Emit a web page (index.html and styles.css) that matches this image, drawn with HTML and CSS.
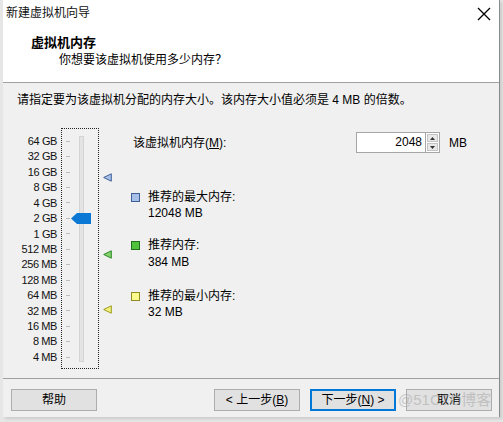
FILE: index.html
```html
<!DOCTYPE html>
<html>
<head>
<meta charset="utf-8">
<link rel="stylesheet" href="styles.css">
</head>
<body>
<div class="window">
  <div class="titlebar">
    <div class="title">新建虚拟机向导</div>
    <div class="tb-x"><svg width="14" height="14" viewBox="0 0 14 14"><path d="M1 1 L13 13 M13 1 L1 13" stroke="#000" stroke-width="1.3" fill="none"/></svg></div>
  </div>
  <div class="header">
    <div class="h-title">虚拟机内存</div>
    <div class="h-sub">你想要该虚拟机使用多少内存？</div>
  </div>
  <div class="content">
    <div class="intro">请指定要为该虚拟机分配的内存大小。该内存大小值必须是 4 MB 的倍数。</div>
    <div class="main">
      <div class="scale">
        <span>64 GB</span><span>32 GB</span><span>16 GB</span><span>8 GB</span><span>4 GB</span>
        <span>2 GB</span><span>1 GB</span><span>512 MB</span><span>256 MB</span><span>128 MB</span>
        <span>64 MB</span><span>32 MB</span><span>16 MB</span><span>8 MB</span><span>4 MB</span>
      </div>
      <div class="slider">
        <div class="ticks">
          <i></i><i></i><i></i><i></i><i></i><i></i><i></i><i></i><i></i><i></i><i></i><i></i><i></i><i></i><i></i>
        </div>
        <div class="track"></div>
        <svg class="thumb" width="20" height="11" viewBox="0 0 20 11"><path d="M0 5.5 L6 0 H20 V11 H6 Z" fill="#0a78d4"/></svg>
      </div>
      <div class="markers">
        <svg class="marker" style="top:45px" width="9" height="9" viewBox="0 0 9 9"><path d="M0.7 4.5 L8.3 0.8 V8.2 Z" fill="#a9c0e6" stroke="#3f5f99" stroke-width="1"/></svg>
        <svg class="marker" style="top:122px" width="9" height="9" viewBox="0 0 9 9"><path d="M0.7 4.5 L8.3 0.8 V8.2 Z" fill="#86d06a" stroke="#2a8a2a" stroke-width="1"/></svg>
        <svg class="marker" style="top:177px" width="9" height="9" viewBox="0 0 9 9"><path d="M0.7 4.5 L8.3 0.8 V8.2 Z" fill="#f3f27c" stroke="#9c9a1e" stroke-width="1"/></svg>
      </div>
      <div class="panel">
        <div class="mem-row">
          <span class="mem-label">该虚拟机内存(<u>M</u>):</span>
          <div class="spin">
            <div class="spin-input">2048</div>
            <div class="spin-btns">
              <div class="sb"><svg width="5" height="3" viewBox="0 0 5 3"><path d="M0 3 L2.5 0 L5 3Z" fill="#333"/></svg></div>
              <div class="sb"><svg width="5" height="3" viewBox="0 0 5 3"><path d="M0 0 L2.5 3 L5 0Z" fill="#333"/></svg></div>
            </div>
          </div>
          <span class="unit">MB</span>
        </div>
        <div class="legend">
          <div class="item">
            <span class="sq sq-blue"></span>
            <div class="txt"><div>推荐的最大内存:</div><div>12048 MB</div></div>
          </div>
          <div class="item item-green">
            <span class="sq sq-green"></span>
            <div class="txt"><div>推荐内存:</div><div>384 MB</div></div>
          </div>
          <div class="item">
            <span class="sq sq-yellow"></span>
            <div class="txt"><div>推荐的最小内存:</div><div>32 MB</div></div>
          </div>
        </div>
      </div>
    </div>
  </div>
  <div class="footer">
    <button class="btn">帮助</button>
    <div class="nav">
      <button class="btn">&lt; 上一步(<u>B</u>)</button>
      <button class="btn btn-default">下一步(<u>N</u>) &gt;</button>
      <button class="btn">取消</button>
    </div>
    <span class="watermark">@51CTO博客</span>
  </div>
</div>
</body>
</html>
```

FILE: styles.css
```css
html, body {
  margin: 0;
  padding: 0;
}
body {
  width: 503px;
  height: 422px;
  background: #e6e6e6;
  font-family: "Liberation Sans", "Noto Sans CJK SC", sans-serif;
  font-size: 12px;
  color: #000;
  overflow: hidden;
}
.window {
  margin-left: 3px;
  width: 496px;
  height: 417px;
  border-right: 1px solid #8a8a8a;
  background: #f0f0f0;
  display: flex;
  flex-direction: column;
  box-shadow: 2px 2px 3px rgba(0,0,0,0.12);
}
.titlebar {
  height: 26px;
  flex-shrink: 0;
  background: #fff;
  display: grid;
  grid-template-columns: 1fr 14px;
  align-items: center;
  padding: 0 8px 0 3px;
}
.title {
  font-size: 12px;
  line-height: 16px;
  color: #111;
}
.tb-x {
  width: 14px;
  height: 14px;
  margin-top: 1px;
}
.tb-x svg {
  display: block;
}
.header {
  background: #fff;
  border-bottom: 1px solid #a0a0a0;
  box-sizing: border-box;
  height: 57px;
  flex-shrink: 0;
  padding-top: 8px;
}
.h-title {
  padding-left: 28px;
  font-size: 13px;
  font-weight: bold;
  line-height: 17px;
}
.h-sub {
  padding-left: 56px;
  margin-top: 1px;
  line-height: 16px;
}
.content {
  height: 295px;
  flex-shrink: 0;
  padding: 9px 0 0 14px;
  box-sizing: border-box;
}
.intro {
  line-height: 16px;
}
.main {
  display: flex;
  align-items: flex-start;
  margin-top: 20px;
}
.scale {
  width: 40px;
  height: 241px;
  box-sizing: border-box;
  padding-top: 5.3px;
  display: grid;
  grid-auto-rows: 15.43px;
  justify-items: end;
  align-items: center;
  font-size: 11px;
  letter-spacing: -0.4px;
  color: #111;
}
.scale span {
  line-height: 12px;
}
.slider {
  margin-left: 4px;
  width: 38px;
  height: 241px;
  box-sizing: border-box;
  border: 1px dotted #222;
  position: relative;
  display: flex;
  align-items: flex-start;
}
.ticks {
  margin-left: 4px;
  padding-top: 4.5px;
  display: grid;
  grid-auto-rows: 15.43px;
  align-items: center;
}
.ticks i {
  display: block;
  width: 4px;
  height: 1px;
  background: #bdbdbd;
}
.track {
  margin-left: 9px;
  margin-top: 7px;
  width: 5px;
  height: 226px;
  box-sizing: border-box;
  background: #e4e4e4;
  border: 1px solid #d4d4d4;
}
.thumb {
  position: absolute;
  left: 9px;
  top: 84px;
}
.markers {
  width: 32px;
  height: 241px;
  position: relative;
}
.marker {
  position: absolute;
  left: 4px;
}
.panel {
  display: flex;
  flex-direction: column;
}
.mem-row {
  display: flex;
  align-items: center;
  margin-top: 4px;
  height: 21px;
}
.mem-label {
  width: 225px;
  padding-left: 2px;
  box-sizing: border-box;
  line-height: 16px;
}
.spin {
  display: flex;
  height: 21px;
}
.spin-input {
  width: 69px;
  height: 21px;
  box-sizing: border-box;
  border: 1px solid #a6a6a6;
  border-right: none;
  background: #fff;
  text-align: right;
  padding-right: 3px;
  line-height: 19px;
}
.spin-btns {
  width: 15px;
  height: 21px;
  box-sizing: border-box;
  border: 1px solid #a6a6a6;
  background: #fff;
  display: flex;
  flex-direction: column;
  padding: 1px;
  gap: 1px;
}
.sb {
  flex: 1;
  background: #e8e8e8;
  border: 1px solid #c4c4c4;
  display: flex;
  align-items: center;
  justify-content: center;
}
.unit {
  margin-left: 9px;
  line-height: 16px;
}
.legend {
  margin-top: 36px;
  display: flex;
  flex-direction: column;
  gap: 16px;
}
.item-green {
  margin-bottom: 2px;
}
.item {
  display: flex;
  align-items: flex-start;
}
.sq {
  width: 9px;
  height: 9px;
  box-sizing: border-box;
  margin-top: 4px;
  margin-right: 8px;
  border: 1px solid;
}
.sq-blue { background: #a8c0e8; border-color: #3f5f99; }
.sq-green { background: #4fc23c; border-color: #1f6f1f; }
.sq-yellow { background: #fbfb8c; border-color: #8e8c22; }
.txt div {
  line-height: 16px;
}
.item-green .txt div + div {
  margin-top: 1px;
}
.footer {
  flex: 1;
  border-top: 1px solid #a0a0a0;
  display: flex;
  align-items: flex-start;
  padding: 10px 7px 0 8px;
  position: relative;
}
.nav {
  margin-left: auto;
  display: flex;
  gap: 10px;
}
.btn {
  width: 86px;
  height: 22px;
  box-sizing: border-box;
  border: 1px solid #adadad;
  background: #e1e1e1;
  font-family: "Liberation Sans", "Noto Sans CJK SC", sans-serif;
  font-size: 12px;
  color: #000;
  padding: 0;
  line-height: 18px;
}
.btn-default {
  border: 2px solid #0078d7;
}
.watermark {
  position: absolute;
  left: 395px;
  top: 12px;
  font-size: 15px;
  line-height: 18px;
  color: rgba(160,160,160,0.5);
  pointer-events: none;
}
```
